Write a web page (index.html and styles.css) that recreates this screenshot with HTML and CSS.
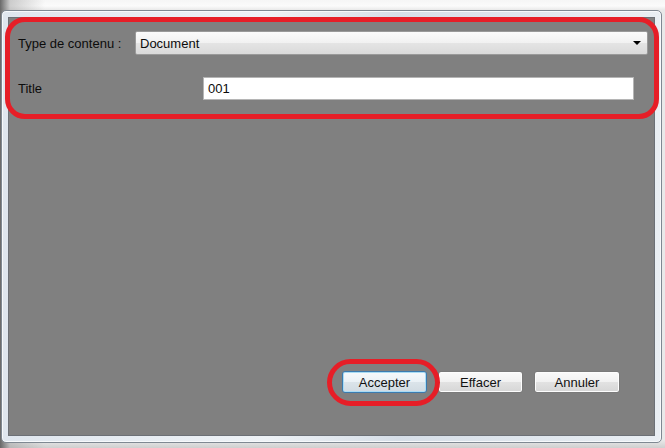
FILE: index.html
```html
<!DOCTYPE html>
<html lang="fr">
<head>
<meta charset="utf-8">
<title>Type de contenu</title>
<link rel="stylesheet" href="styles.css">
</head>
<body>
<div class="screen">
  <div class="window">
    <div class="panel">
      <div class="row row-type">
        <span class="label label-type">Type de contenu :</span>
        <div class="select">
          <span class="select-value">Document</span>
          <svg class="arrow" width="8" height="4" viewBox="0 0 8 4"><path d="M0 0H8L4 4Z" fill="#000"/></svg>
        </div>
      </div>
      <div class="row row-title">
        <span class="label label-title">Title</span>
        <div class="input">001</div>
      </div>
      <div class="spacer"></div>
      <div class="buttons">
        <button class="btn btn-default">Accepter</button>
        <button class="btn">Effacer</button>
        <button class="btn btn-wide">Annuler</button>
      </div>
    </div>
  </div>
  <div class="mark mark-fields"></div>
  <div class="mark mark-accept"></div>
</div>
</body>
</html>
```

FILE: styles.css
```css
html, body {
  margin: 0;
  padding: 0;
}
body {
  width: 665px;
  height: 448px;
  overflow: hidden;
  font-family: "Liberation Sans", Arial, sans-serif;
  font-size: 13px;
  color: #0c0c0c;
  background:
    linear-gradient(to right, rgba(90,90,90,0.9) 0, rgba(160,160,160,0.5) 10px, rgba(240,240,240,0) 45px),
    linear-gradient(to bottom, #f6f6f6 0, #fbfbfb 6px, #e9e9e9 10px, #e9e9e9 440px, #cfcfcf 448px);
}
.screen {
  position: relative;
  width: 665px;
  height: 448px;
  padding-top: 10px;
  box-sizing: border-box;
}
.window {
  margin-left: 1px;
  width: 661px;
  box-sizing: border-box;
  border: 1px solid #7f8892;
  border-radius: 5px;
  padding: 6px;
  background: linear-gradient(to right, #dfe6ee, #eef2f6 40%, #d7dfe8 60%, #e9eef3);
  box-shadow: inset 0 0 0 1px #f7f9fb;
}
.panel {
  height: 419px;
  box-sizing: border-box;
  background: #808080;
  border: 1px solid #6c7076;
  padding: 13px 6px 42px 8px;
  display: flex;
  flex-direction: column;
}
.row {
  display: flex;
  align-items: center;
}
.label {
  flex: none;
  padding-left: 1px;
}
.label-type {
  width: 117px;
}
.label-title {
  width: 185px;
}
.select {
  flex: 1;
  height: 24px;
  box-sizing: border-box;
  border: 1px solid #9a9a9a;
  border-radius: 2px;
  background: linear-gradient(to bottom, #fbfbfb 0, #f1f1f1 50%, #e4e4e4 51%, #dadada 100%);
  display: flex;
  align-items: center;
  padding: 0 6px 0 4px;
}
.select-value {
  flex: 1;
}
.arrow {
  display: block;
}
.row-title {
  margin-top: 22px;
}
.input {
  width: 431px;
  height: 23px;
  box-sizing: border-box;
  background: #fff;
  border: 1px solid #b5b5b5;
  padding: 3px 4px 0;
  line-height: 16px;
}
.spacer {
  flex: 1;
}
.buttons {
  display: flex;
  justify-content: flex-end;
  gap: 11px;
  margin-right: 28px;
}
.btn {
  width: 85px;
  height: 22px;
  box-sizing: border-box;
  font-family: "Liberation Sans", Arial, sans-serif;
  font-size: 13px;
  color: #111;
  border: 1px solid #7a7a7a;
  border-radius: 3px;
  background: linear-gradient(to bottom, #fafafa 0, #f1f1f1 50%, #e2e2e2 51%, #d6d6d6 100%);
  box-shadow: inset 0 0 0 1px #fdfdfd;
  padding: 0;
}
.btn-wide {
  width: 86px;
}
.btn-default {
  border-color: #3a7bb0;
  background: linear-gradient(to bottom, #f6f9fb 0, #eaf1f6 50%, #dbe4ea 51%, #d1dbe2 100%);
  box-shadow: inset 0 0 0 1px #a9dcf4;
}
.mark {
  position: absolute;
  box-sizing: border-box;
  border: 5px solid #e61e27;
}
.mark-fields {
  left: 5px;
  top: 17px;
  width: 654px;
  height: 102px;
  border-radius: 20px;
}
.mark-accept {
  left: 327px;
  top: 359px;
  width: 113px;
  height: 47px;
  border-radius: 24px;
}
```
